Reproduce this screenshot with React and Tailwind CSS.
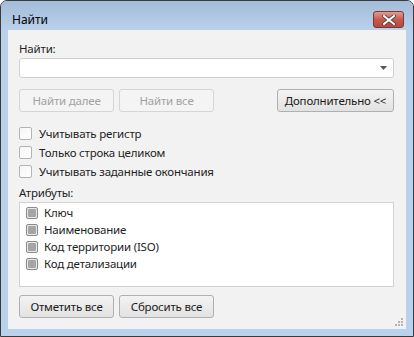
import React from "react";

const font = { fontFamily: '"Noto Sans", "Open Sans", sans-serif' };

function Btn({ children, disabled, className = "" }) {
  return (
    <div
      className={
        "flex h-[23px] items-center justify-center rounded-[3px] border text-[11.5px] tracking-[-0.2px] " +
        (disabled
          ? "border-[#d5d5d5] bg-[#f4f4f4] text-[#a2a2a2] "
          : "border-[#b0b0b0] bg-gradient-to-b from-[#f3f3f3] to-[#e2e2e2] text-[#1a1a1a] ") +
        className
      }
    >
      {children}
    </div>
  );
}

function Check({ label }) {
  return (
    <div className="flex h-[19px] items-center">
      <div className="h-[13px] w-[13px] rounded-[2px] border border-[#b4b4b4] bg-gradient-to-br from-[#f6f6f6] to-[#ffffff]" />
      <span className="ml-[7px] text-[11.5px] tracking-[-0.2px] text-[#1e1e1e]">{label}</span>
    </div>
  );
}

function ListItem({ label }) {
  return (
    <div className="flex h-[17px] items-center">
      <div className="flex h-[12px] w-[12px] items-center justify-center rounded-[2px] border border-[#8a8a8a] bg-[#e8e8e8]">
        <div className="h-[8px] w-[8px] rounded-[1px] bg-[#a5a5a5]" />
      </div>
      <span className="ml-[6px] text-[11.5px] tracking-[-0.2px] text-[#1e1e1e]">{label}</span>
    </div>
  );
}

export default function App() {
  return (
    <div style={font} className="h-[337px] w-[414px] bg-white">
      <div className="flex h-[337px] w-[414px] flex-col rounded-t-[7px] border border-[#3b3b3b] bg-[#b9d1ea]">
        <div className="flex h-[29px] items-center bg-gradient-to-b from-[#a3bcd9] to-[#bad1ea] pl-[11px] pr-[9px] pt-[8px] rounded-t-[6px]">
          <span className="text-[12px] text-black">Найти</span>
          <div className="ml-auto flex h-[17px] w-[31px] items-center justify-center rounded-[3px] border border-[#7a3a35] bg-gradient-to-b from-[#dc9d92] via-[#c65a4e] to-[#b9473e]">
            <svg width="14" height="10" viewBox="0 0 14 10">
              <path d="M2 1 L12 9 M12 1 L2 9" stroke="#4a3d3d" strokeWidth="3.6" strokeLinecap="square" />
              <path d="M2 1 L12 9 M12 1 L2 9" stroke="#ffffff" strokeWidth="2" strokeLinecap="square" />
            </svg>
          </div>
        </div>
        <div className="mx-[7px] flex h-[299px] flex-col bg-[#f2f2f2] pl-[11px] pr-[12px] pt-[10px]">
          <div className="h-[17px] text-[11.5px] tracking-[-0.2px] leading-[17px] text-[#1e1e1e]">Найти:</div>
          <div className="mt-[1px] flex h-[20px] items-center rounded-[3px] border border-[#d0d0d0] bg-white pr-[6px]">
            <svg className="ml-auto" width="7" height="4" viewBox="0 0 7 4">
              <path d="M0 0 H7 L3.5 4 Z" fill="#555" />
            </svg>
          </div>
          <div className="mt-[11px] flex">
            <Btn disabled className="w-[95px]">Найти далее</Btn>
            <Btn disabled className="ml-[5px] w-[95px]">Найти все</Btn>
            <Btn className="ml-auto w-[117px]">Дополнительно &lt;&lt;</Btn>
          </div>
          <div className="mt-[12px] flex flex-col">
            <Check label="Учитывать регистр" />
            <Check label="Только строка целиком" />
            <Check label="Учитывать заданные окончания" />
          </div>
          <div className="mt-[3px] h-[17px] text-[11.5px] tracking-[-0.2px] leading-[17px] text-[#1e1e1e]">Атрибуты:</div>
          <div className="mt-[1px] flex h-[85px] flex-col border border-[#d2d2d2] bg-white pl-[6px] pt-[1px]">
            <ListItem label="Ключ" />
            <ListItem label="Наименование" />
            <ListItem label="Код территории (ISO)" />
            <ListItem label="Код детализации" />
          </div>
          <div className="mt-[8px] flex">
            <Btn className="w-[95px]">Отметить все</Btn>
            <Btn className="ml-[5px] w-[95px]">Сбросить все</Btn>
          </div>
          <div className="relative flex-1">
            <svg className="absolute bottom-[2px] right-[-9px]" width="10" height="10" viewBox="0 0 10 10">
              {[[8, 0], [8, 3], [5, 3], [8, 6], [5, 6], [2, 6]].map(([x, y], i) => (
                <rect key={i} x={x} y={y + 1} width="2" height="2" fill="#b5b5b5" />
              ))}
            </svg>
          </div>
        </div>
      </div>
    </div>
  );
}
